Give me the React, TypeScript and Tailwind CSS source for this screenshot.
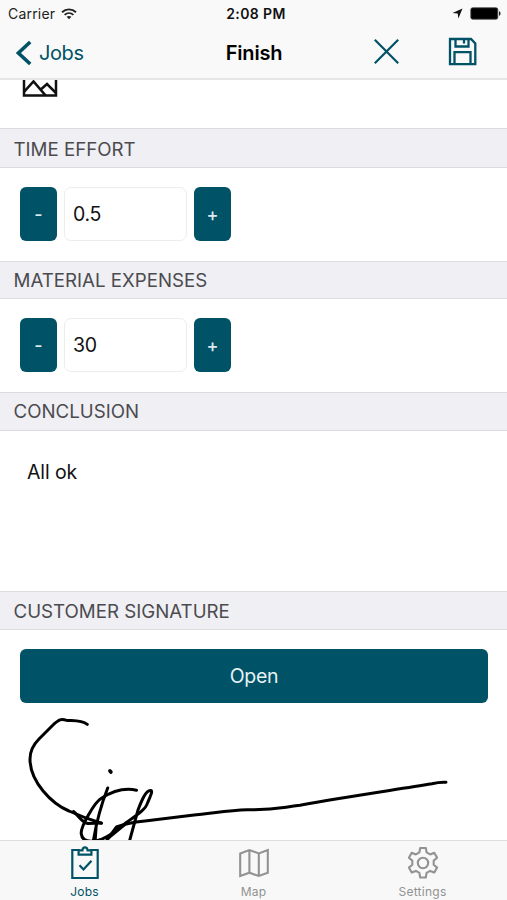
import React from 'react';
import clsx from 'clsx';

function WifiIcon() {
  return (
    <svg width="16" height="12" viewBox="0 0 16 12" fill="none" stroke="#222" strokeWidth="1.9">
      <path d="M1 4.2C5 .4 11 .4 15 4.2" />
      <path d="M3.6 6.9C6.2 4.5 9.8 4.5 12.4 6.9" />
      <path d="M5.6 8.8C7 7.6 9 7.6 10.4 8.8L8 11.2z" fill="#222" stroke="none" />
    </svg>
  );
}

function StatusBar() {
  return (
    <div className="grid h-[27px] grid-cols-3 items-center pl-2 pr-[6px]">
      <div className="flex items-center gap-[6px]">
        <span className="text-[14px] tracking-[0.2px] text-[#222]">Carrier</span>
        <WifiIcon />
      </div>
      <span className="pl-[3px] text-center text-[14px] font-semibold tracking-[0.4px] text-[#111]">2:08 PM</span>
      <div className="flex items-center justify-end gap-[7px]">
        <svg width="11" height="11" viewBox="0 0 11 11">
          <path d="M10.5.5L6.4 10.5 5.7 5.4.5 5z" fill="#111" />
        </svg>
        <svg width="31" height="13" viewBox="0 0 31 13">
          <rect x=".8" y=".8" width="27" height="11.4" rx="1.8" fill="#000" stroke="#444" strokeWidth=".8" />
          <path d="M29 4.2c2 .4 2 4.2 0 4.6z" fill="#222" />
        </svg>
      </div>
    </div>
  );
}

function NavBar() {
  return (
    <div className="grid h-[49px] grid-cols-3 items-center pl-[15px] text-[#005266]">
      <button className="flex items-center gap-[7px] pt-[2px] text-left">
        <svg width="17" height="28" viewBox="0 0 17 28" fill="none" stroke="currentColor" strokeWidth="3.6">
          <path d="M15.2 3L3.4 14l11.8 11" />
        </svg>
        <span className="text-[20px] tracking-[-0.4px]">Jobs</span>
      </button>
      <h1 className="pr-[14px] pt-[2px] text-center text-[20px] font-semibold tracking-[-0.2px] text-black">Finish</h1>
      <div className="flex items-center gap-[48px] pl-[30px]">
        <svg width="27" height="27" viewBox="0 0 27 27" fill="none" stroke="currentColor" strokeWidth="2.2">
          <path d="M1.8 1.8l23.4 23.4M25.2 1.8L1.8 25.2" />
        </svg>
        <svg width="29" height="29" viewBox="0 0 29 29" fill="none" stroke="currentColor" strokeWidth="2.3">
          <path d="M2 2h21l4.3 4.5v20.7H2z" />
          <path d="M7.5 2v7.5h13V2M16 3v3.5" />
          <path d="M6.5 27V15.2h16V27" />
        </svg>
      </div>
    </div>
  );
}

function SectionHeader({ title, className }: { title: string; className?: string }) {
  return (
    <h2
      className={clsx(
        'flex items-center border-y border-[#dcdce0] bg-[#efeff4] pl-[13.5px] text-[18.7px] text-[#4b4b4f]',
        className,
      )}
    >
      {title}
    </h2>
  );
}

function StepButton({ label }: { label: string }) {
  return (
    <button className="h-[54px] w-[37px] rounded-[6px] bg-[#005266] pt-px text-[18px] font-medium text-[#dceaf0]">
      {label}
    </button>
  );
}

function Stepper({ value }: { value: string }) {
  return (
    <div className="flex h-[93px] items-center gap-[7px] pb-px pl-5">
      <StepButton label="-" />
      <div className="flex h-[54px] w-[123px] items-center rounded-[7px] border border-[#ededed] pl-2 pt-px text-[19.5px] tracking-[-0.3px] text-[#111]">
        {value}
      </div>
      <StepButton label="+" />
    </div>
  );
}

function Signature() {
  return (
    <svg
      className="block"
      width="507"
      height="137"
      viewBox="0 703 507 137"
      fill="none"
      stroke="#000"
      strokeWidth="3"
      strokeLinecap="round"
      strokeLinejoin="round"
    >
      <path d="M87.3 724.4C81 719.5 72 721 66 720.2C61 718.5 59 720 54 724L39 739C33 745 30 751 30 759C30 782 52 804 69 811C80 816 91 820 101.5 823.3" />
      <path d="M73.5 811.5C79 816 82 823 88 823.5L101 823" />
      <path d="M109.9 770.8l1 1.2" strokeWidth="3.6" />
      <path d="M107.7 788C103 800 98 813 93.5 840M96.3 824L95.2 840" />
      <path d="M136.5 790.2C124 787.5 111 792 101 798.5C95 802 80 827 81.3 834C82 839 86 842 94 841C106 840 118 829 127 822C137 815 146 809 147.5 803C150 797 153 791 151 790.5C146 789 141 802 138 810L129.5 841" />
      <path d="M107 840L116.5 827C126 823 135 822 145 821L192 815.3C215 813 229 810.3 247 809.8C273 810 278 808 300 805.3C345 797 391 790.5 432 783.8Q439 782 446 782.3" />
      <path d="M107.5 838.5L124 825" strokeWidth="3.5" />
    </svg>
  );
}

function Tab({ label, active, children }: { label: string; active?: boolean; children: React.ReactNode }) {
  return (
    <button
      className={clsx(
        'flex flex-1 flex-col items-center pt-[5px] text-[12px] leading-[15px] tracking-[0.25px]',
        active ? 'text-[#005266]' : 'text-[#929292]',
      )}
    >
      {children}
      <span className="mt-1">{label}</span>
    </button>
  );
}

function TabBar() {
  return (
    <nav className="flex h-[60px] shrink-0 border-t border-[#dedede] bg-[#f8f8f8]">
      <Tab label="Jobs" active>
        <svg width="30" height="34" viewBox="0 0 30 34" fill="none" stroke="currentColor" strokeWidth="2.2">
          <path d="M10 4H2.3v28h25.4V4H20" />
          <path d="M8.6 3v5.6h12.8V4.3h-3.8c-.4-4-4.8-4-5.2 0H8.6" />
          <path d="M9.5 19.2l4 4.2 8-8.7" />
        </svg>
      </Tab>
      <Tab label="Map">
        <svg width="32" height="34" viewBox="0 0 32 34" fill="none" stroke="currentColor" strokeWidth="2.1">
          <path d="M2.2 7.4l9.2-3.3 9.4 3.3 9-3.3v22.6l-9 3.3-9.4-3.3-9.2 3.3zM11.4 4.1v22.6M20.8 7.4V30" />
        </svg>
      </Tab>
      <Tab label="Settings">
        <svg width="34" height="34" viewBox="0 0 34 34" fill="none" stroke="currentColor" strokeWidth="2.1" strokeLinejoin="round">
          <path d="M14.2 2h5.6l.8 4.4 3.5 2 4.2-1.6 2.8 4.9-3.4 2.9v4.1l3.4 2.9-2.8 4.9-4.2-1.6-3.5 2-.8 4.6h-5.6l-.8-4.6-3.5-2-4.2 1.6-2.8-4.9 3.4-2.9v-4.1l-3.4-2.9 2.8-4.9 4.2 1.6 3.5-2z" />
          <circle cx="17" cy="17" r="5.2" />
        </svg>
      </Tab>
    </nav>
  );
}

export default function App() {
  return (
    <div className="flex h-[900px] w-[507px] flex-col overflow-hidden bg-white font-['Inter',sans-serif]">
      <header className="h-[80px] shrink-0 border-b-2 border-[#e6e6e6] bg-[#f9f9f9]">
        <StatusBar />
        <NavBar />
      </header>

      <main className="min-h-0 flex-1 overflow-hidden">
        <div className="h-12 pl-[22px]">
          <svg width="36" height="17" viewBox="0 0 36 17" fill="none" stroke="#111" strokeWidth="2.5">
            <path d="M2 0v15.6h32V0" />
            <path d="M2 11.8L11.5 1.4l12 14M18.5 9.8L25 4l9 9" />
          </svg>
        </div>

        <SectionHeader title="TIME EFFORT" className="h-10 pt-1" />
        <Stepper value="0.5" />

        <SectionHeader title="MATERIAL EXPENSES" className="h-[38px] pt-[2px]" />
        <Stepper value="30" />

        <SectionHeader title="CONCLUSION" className="h-[39px] pt-px" />
        <p className="h-[160px] pl-[27px] pt-[27px] text-[19.5px] leading-7 tracking-[-0.1px] text-[#111]">All ok</p>

        <SectionHeader title="CUSTOMER SIGNATURE" className="h-[39px] pt-[3px]" />
        <div className="px-5 pt-[19px]">
          <button className="h-[54px] w-[468px] rounded-[6px] bg-[#005266] pt-[2px] text-[19.5px] tracking-[-0.3px] text-[#e6f1f5]">
            Open
          </button>
        </div>
        <Signature />
      </main>

      <TabBar />
    </div>
  );
}
